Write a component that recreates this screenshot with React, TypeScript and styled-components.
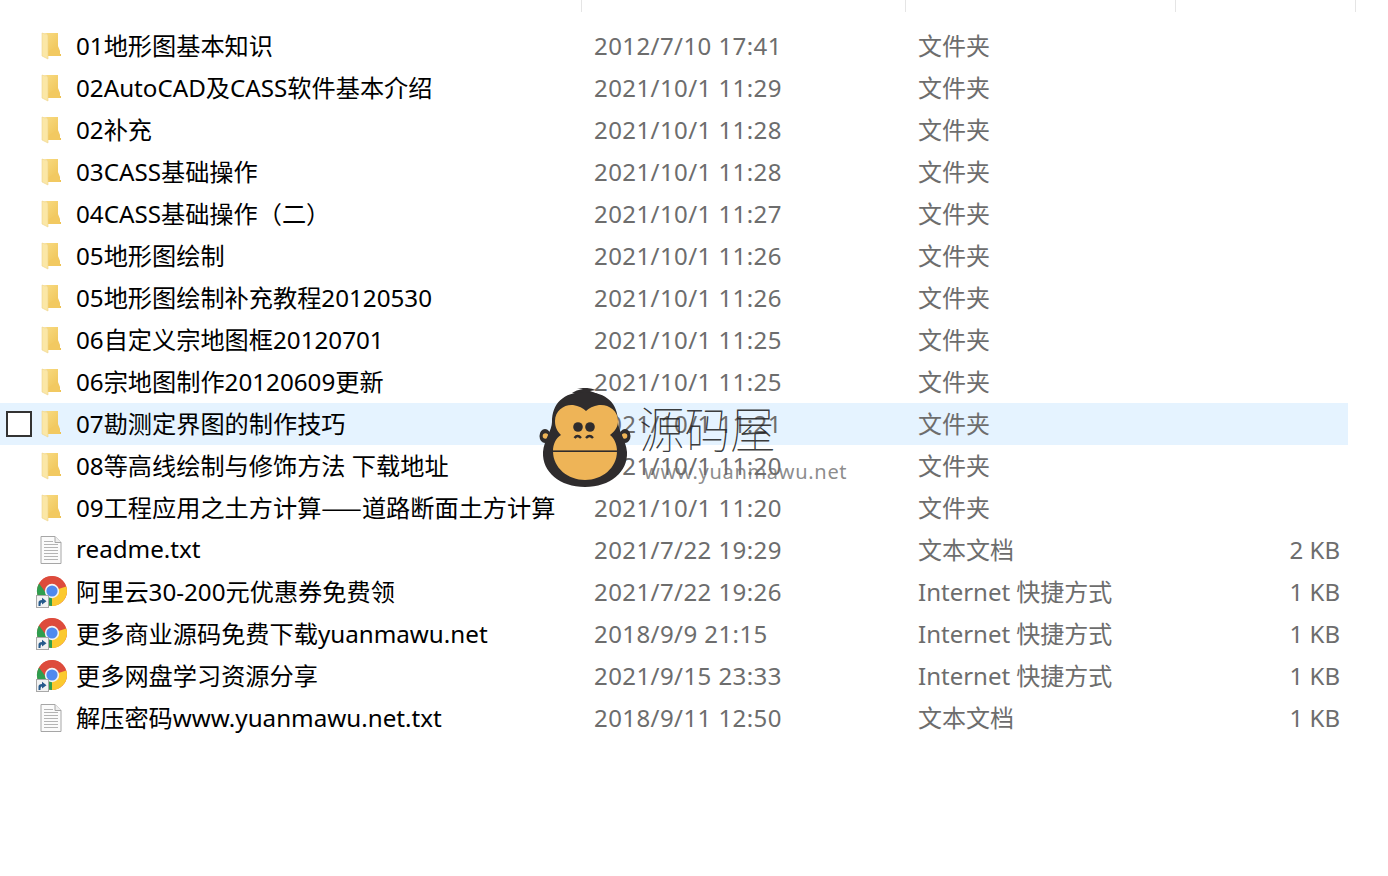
import React from 'react';
import styled, { createGlobalStyle } from 'styled-components';

const GlobalStyle = createGlobalStyle`
  html, body {
    margin: 0;
    padding: 0;
    background: #fff;
    overflow: hidden;
  }
`;

const Page = styled.div`
  position: relative;
  width: 1388px;
  height: 876px;
  background: #fff;
  font-family: "Noto Sans", "Noto Sans CJK SC", sans-serif;
`;

const Header = styled.div`
  display: grid;
  grid-template-columns: 582px 324px 270px 180px;
  height: 12px;
  margin-bottom: 13px;
`;

const HeaderCell = styled.div`
  border-right: 1px solid #e5e5e5;
`;

const List = styled.div`
  display: flex;
  flex-direction: column;
  width: 1348px;
`;

const Row = styled.div<{ $selected?: boolean }>`
  display: grid;
  grid-template-columns: 6px 26px 36px 508px 324px 270px 178px;
  align-items: center;
  height: 42px;
  background: ${p => (p.$selected ? '#e5f3ff' : 'transparent')};
`;

const Check = styled.div`
  grid-column: 2;
  box-sizing: border-box;
  width: 26px;
  height: 26px;
  background: #fff;
  border: 2px solid #333;
`;

const IconCell = styled.div`
  grid-column: 3;
  display: flex;
  align-items: center;
  justify-content: center;
  height: 32px;
  width: 38px;
`;

const Name = styled.div`
  grid-column: 4;
  font-size: 24.2px;
  color: #000;
  white-space: nowrap;
  padding: 0 0 3px 8px;
`;

const Dash = styled.span`
  font-family: "Noto Sans CJK SC", sans-serif;
`;

const Cell = styled.div`
  font-size: 24px;
  color: #6d6d6d;
  white-space: nowrap;
  padding: 0 0 3px 18px;
`;

const DateCell = styled(Cell)`
  letter-spacing: 0.42px;
  padding-bottom: 1px;
`;

const SizeCell = styled(Cell)`
  text-align: right;
  padding: 0 8px 1px 0;
`;

const Watermark = styled.div`
  position: absolute;
  left: 538px;
  top: 388px;
  width: 310px;
  height: 102px;
  pointer-events: none;
`;

const MarkTitle = styled.div`
  position: absolute;
  left: 101px;
  top: 12px;
  font-family: "Noto Sans CJK SC", sans-serif;
  font-weight: 100;
  font-size: 45.5px;
  line-height: 58px;
  color: rgba(35, 35, 35, 0.9);
  transform: scaleY(1.08);
  transform-origin: bottom;
`;

const MarkUrl = styled.div`
  position: absolute;
  left: 106px;
  top: 72px;
  font-family: "Noto Sans", sans-serif;
  font-size: 20px;
  line-height: 24px;
  letter-spacing: 0.7px;
  color: rgba(110, 110, 110, 0.8);
`;

const MonkeySvg = styled.svg`
  position: absolute;
  left: 0;
  top: 0;
`;

const Folder = () => (
  <svg width="20" height="28" viewBox="0 0 20 28">
    <defs>
      <linearGradient id="fb" x1="0" y1="0" x2="1" y2="1">
        <stop offset="0" stopColor="#f9dd86" />
        <stop offset="1" stopColor="#eec04f" />
      </linearGradient>
    </defs>
    <path d="M1 1 H17 V22 L20 22 V24 H6 V2 Z" fill="url(#fb)" />
    <path d="M17 14 L19 19 V24 H6 V20 Z" fill="#f2c961" />
    <path d="M1 1 L7 3 V27 L5 26 L1 24 Z" fill="#fbe7a6" stroke="#eed48c" strokeWidth="0.6" />
  </svg>
);

const TextFile = () => (
  <svg width="22" height="28" viewBox="0 0 22 28">
    <path d="M1 .5 H15 L21 6.5 V27.5 H1 Z" fill="#fbfbfb" stroke="#a6a6a6" />
    <path d="M15 .5 V6.5 H21" fill="#eeeeee" stroke="#a6a6a6" />
    <path
      d="M4 5.5 H13 M4 8.5 H18 M4 11.5 H18 M4 14.5 H18 M4 17.5 H18 M4 20.5 H18 M4 23.5 H18"
      stroke="#b4b4b4"
      strokeWidth="1.2"
    />
  </svg>
);

const Chrome = () => (
  <svg width="32" height="32" viewBox="0 0 32 32">
    <circle cx="17" cy="15" r="15" fill="#dd4b3c" />
    <path d="M17 15 L31.3 10.5 A15 15 0 0 1 17 30 Z" fill="#fbc92f" />
    <path d="M17 15 L17 30 A15 15 0 0 1 4 7.5 Z" fill="#2f9e4f" />
    <path d="M17 9 H30.5 A15 15 0 0 0 4 7.5 L11 17 A6.5 6.5 0 0 1 17 9 Z" fill="#dd4b3c" />
    <circle cx="17" cy="15" r="7.2" fill="#f4f4f4" />
    <circle cx="17" cy="15" r="5.6" fill="#4f89ee" />
    <rect x="1.5" y="19.5" width="12" height="12" fill="#f2f2f2" stroke="#a8a8a8" />
    <path d="M3.5 30 V26.5 Q3.5 24 7 24 V21.8 L11.5 25.2 L7 28.6 V26.6 Q5.5 26.6 5.5 30 Z" fill="#265a8c" />
  </svg>
);

const Monkey = () => (
  <MonkeySvg width="94" height="102" viewBox="0 0 94 102">
    <ellipse cx="7" cy="48" rx="5.5" ry="7" fill="#2f2c2d" />
    <ellipse cx="87" cy="48" rx="5.5" ry="7" fill="#2f2c2d" />
    <circle cx="7.5" cy="48" r="2.8" fill="#eeb457" />
    <circle cx="86.5" cy="48" r="2.8" fill="#eeb457" />
    <path d="M34 5 Q38 2 45 1 L39 0 Q50 -1 58 2 L52 3 L60 6 Z" fill="#2f2c2d" />
    <path
      d="M47 4 C25 4 14 16 14 34 C14 42 6 52 5 64 C4 84 22 99 47 99 C72 99 90 84 89 64 C88 52 80 42 80 34 C80 16 69 4 47 4 Z"
      fill="#2f2c2d"
    />
    <path
      d="M17 33 C17 22 27 16 35 17 C41 18 45 20 48 23 C51 20 55 18 61 17 C70 16 80 22 80 33 C80 39 77 43 72 47 C76 50 79 56 79 63 H15 C15 56 18 50 23 47 C19 43 17 39 17 33 Z"
      fill="#eeb457"
    />
    <path d="M15 63 H79 C79 80 64 92 47 92 C30 92 15 80 15 63 Z" fill="#eeb457" />
    <rect x="14" y="62.4" width="66" height="1.6" fill="#2f2c2d" />
    <circle cx="40" cy="39" r="4.8" fill="#2f2c2d" />
    <circle cx="52" cy="39" r="4.8" fill="#2f2c2d" />
    <path d="M36.5 50 Q39.5 46 43 50 M48 50 Q51.5 46 55 50" stroke="#2f2c2d" strokeWidth="2.4" fill="none" />
  </MonkeySvg>
);

type Kind = 'folder' | 'text' | 'link';

const files: { name: string; date: string; type: string; size?: string; kind: Kind }[] = [
  { name: '01地形图基本知识', date: '2012/7/10 17:41', type: '文件夹', kind: 'folder' },
  { name: '02AutoCAD及CASS软件基本介绍', date: '2021/10/1 11:29', type: '文件夹', kind: 'folder' },
  { name: '02补充', date: '2021/10/1 11:28', type: '文件夹', kind: 'folder' },
  { name: '03CASS基础操作', date: '2021/10/1 11:28', type: '文件夹', kind: 'folder' },
  { name: '04CASS基础操作（二）', date: '2021/10/1 11:27', type: '文件夹', kind: 'folder' },
  { name: '05地形图绘制', date: '2021/10/1 11:26', type: '文件夹', kind: 'folder' },
  { name: '05地形图绘制补充教程20120530', date: '2021/10/1 11:26', type: '文件夹', kind: 'folder' },
  { name: '06自定义宗地图框20120701', date: '2021/10/1 11:25', type: '文件夹', kind: 'folder' },
  { name: '06宗地图制作20120609更新', date: '2021/10/1 11:25', type: '文件夹', kind: 'folder' },
  { name: '07勘测定界图的制作技巧', date: '2021/10/1 11:21', type: '文件夹', kind: 'folder' },
  { name: '08等高线绘制与修饰方法 下载地址', date: '2021/10/1 11:20', type: '文件夹', kind: 'folder' },
  { name: '09工程应用之土方计算——道路断面土方计算', date: '2021/10/1 11:20', type: '文件夹', kind: 'folder' },
  { name: 'readme.txt', date: '2021/7/22 19:29', type: '文本文档', size: '2 KB', kind: 'text' },
  { name: '阿里云30-200元优惠券免费领', date: '2021/7/22 19:26', type: 'Internet 快捷方式', size: '1 KB', kind: 'link' },
  { name: '更多商业源码免费下载yuanmawu.net', date: '2018/9/9 21:15', type: 'Internet 快捷方式', size: '1 KB', kind: 'link' },
  { name: '更多网盘学习资源分享', date: '2021/9/15 23:33', type: 'Internet 快捷方式', size: '1 KB', kind: 'link' },
  { name: '解压密码www.yuanmawu.net.txt', date: '2018/9/11 12:50', type: '文本文档', size: '1 KB', kind: 'text' },
];

const icons: Record<Kind, React.ReactNode> = {
  folder: <Folder />,
  text: <TextFile />,
  link: <Chrome />,
};

// the long dash joins up only in the CJK face
const renderName = (name: string) => {
  const [before, after] = name.split('——');
  if (after === undefined) return name;
  return (
    <>
      {before}
      <Dash>——</Dash>
      {after}
    </>
  );
};

export default function App() {
  return (
    <Page>
      <GlobalStyle />
      <Header>
        <HeaderCell />
        <HeaderCell />
        <HeaderCell />
        <HeaderCell />
      </Header>
      <List>
        {files.map((f, i) => (
          <Row key={f.name} $selected={i === 9}>
            {i === 9 && <Check />}
            <IconCell>{icons[f.kind]}</IconCell>
            <Name>{renderName(f.name)}</Name>
            <DateCell>{f.date}</DateCell>
            <Cell>{f.type}</Cell>
            <SizeCell>{f.size}</SizeCell>
          </Row>
        ))}
      </List>
      <Watermark>
        <Monkey />
        <MarkTitle>源码屋</MarkTitle>
        <MarkUrl>www.yuanmawu.net</MarkUrl>
      </Watermark>
    </Page>
  );
}
